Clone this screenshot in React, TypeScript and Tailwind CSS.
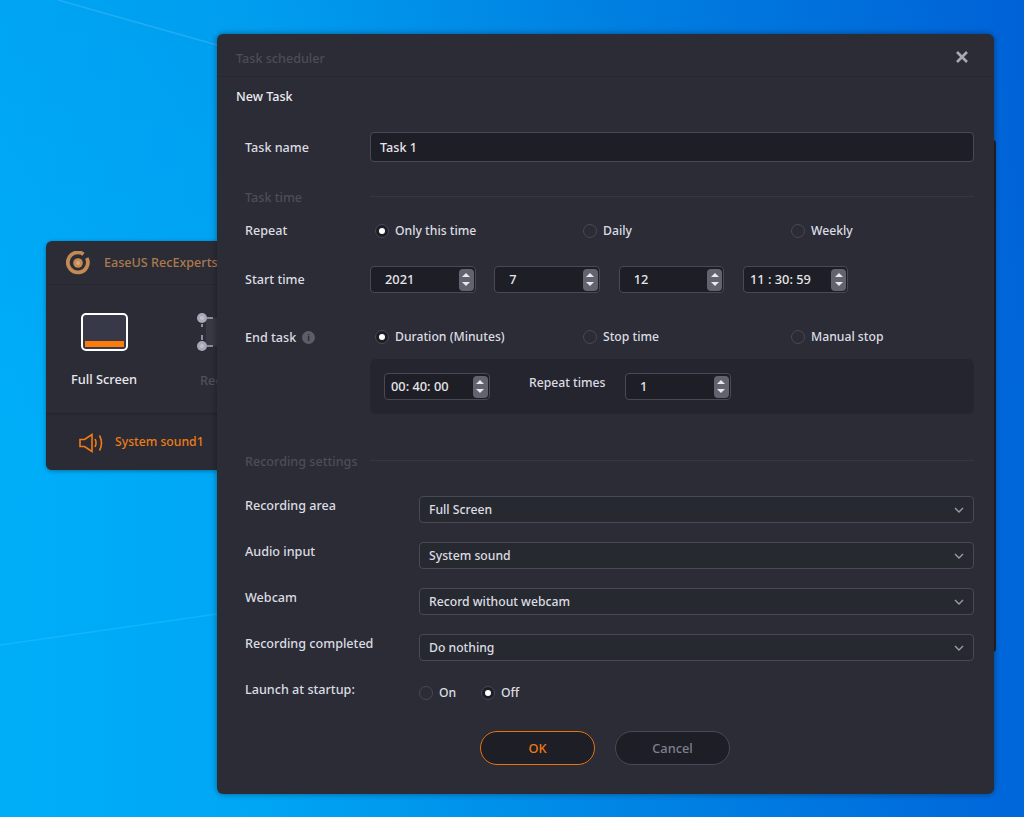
import React from "react";

function Spinner() {
  return (
    <div className="w-[15px] h-[22px] rounded-[4px] bg-[#63636f] flex flex-col items-center justify-center gap-[5px] shrink-0">
      <svg width="8" height="4" viewBox="0 0 8 4"><path d="M4 0L8 4H0z" fill="#e8e8ee" /></svg>
      <svg width="8" height="4" viewBox="0 0 8 4"><path d="M4 4L8 0H0z" fill="#e8e8ee" /></svg>
    </div>
  );
}

function NumberBox({ value, pl }: { value: string; pl: string }) {
  return (
    <div className={`w-[105.5px] h-[27px] rounded-[4px] border border-[#484955] bg-[#1e1e26] flex items-center justify-between pr-[1px] ${pl}`}>
      <span className="text-[#e6e6ea] text-[12.8px] font-medium leading-none">{value}</span>
      <Spinner />
    </div>
  );
}

function Radio({ label, checked, className }: { label: string; checked?: boolean; className?: string }) {
  return (
    <div className={`flex items-center gap-[6px] ${className ?? ""}`}>
      <div className={`w-[14px] h-[14px] rounded-full border-[1.5px] border-[#484955] flex items-center justify-center ${checked ? "bg-[#1e1e26]" : ""}`}>
        {checked && <div className="w-[6px] h-[6px] rounded-full bg-white" />}
      </div>
      <span className="text-[#dcdce2] text-[12.2px] font-medium leading-none">{label}</span>
    </div>
  );
}

function Label({ children, className }: { children: React.ReactNode; className?: string }) {
  return <span className={`block pt-[1px] text-[#dcdce2] text-[12.6px] font-medium leading-none ${className ?? ""}`}>{children}</span>;
}

function SectionTitle({ title }: { title: string }) {
  return (
    <div className="flex items-center pl-[28px] pr-[20px] h-[16px]">
      <span className="w-[125px] shrink-0 pt-[3px] text-[#4c4e5a] text-[12.6px] font-medium leading-none">{title}</span>
      <div className="flex-1 h-px bg-[#353641] -translate-y-[1px]" />
    </div>
  );
}

function SelectRow({ label, value }: { label: string; value: string }) {
  return (
    <div className="flex items-start pl-[28px] pr-[20px] h-[27px]">
      <div className="w-[174px] shrink-0 pt-[3px]"><Label>{label}</Label></div>
      <div className="flex-1 h-[27px] rounded-[4px] border border-[#484955] bg-[#272930] flex items-center justify-between pl-[9px] pr-[9px]">
        <span className="text-[#dcdce2] text-[12.2px] font-medium leading-none pt-[1px]">{value}</span>
        <svg width="10" height="6" viewBox="0 0 10 6" fill="none"><path d="M1 1l4 4 4-4" stroke="#9b9ba6" strokeWidth="1.4" /></svg>
      </div>
    </div>
  );
}

export default function App() {
  return (
    <div
      className="relative w-[1024px] h-[817px] overflow-hidden bg-[linear-gradient(to_bottom,rgba(0,50,180,0.08)_0%,rgba(0,50,180,0)_55%),linear-gradient(to_right,#00aef8_0%,#00a6f4_25%,#0084e4_62%,#0066da_100%)]"
      style={{ fontFamily: '"Noto Sans", sans-serif' }}
    >
      {/* wallpaper light rays */}
      <svg className="absolute inset-0" width="1024" height="817" viewBox="0 0 1024 817" fill="none">
        <path d="M58 0L217 45" stroke="#38b4f4" strokeWidth="1.5" opacity="0.6" />
        <path d="M0 645L217 614" stroke="#22c0ff" strokeWidth="1.5" opacity="0.5" />
      </svg>

      {/* recorder window */}
      <div className="absolute left-[46px] top-[241px] w-[400px] h-[229px] rounded-[6px] bg-[#2b2c36] flex flex-col shadow-[0_1px_4px_rgba(0,0,0,0.35)]">
        <div className="h-[44px] shrink-0 border-b border-[#272831] flex items-center pl-[20px] pt-[1px]">
          <svg width="24" height="24" viewBox="0 0 24 24" fill="none">
            <path d="M17.5 3.2A10 10 0 1 0 20.8 7" stroke="#c48a53" strokeWidth="3.8" />
            <circle cx="12" cy="12" r="4.8" fill="#c48a53" />
            <circle cx="12" cy="12" r="2" fill="#d8a878" />
          </svg>
          <span className="ml-[14px] text-[#ad7a4d] text-[12.6px] font-medium leading-none">EaseUS RecExperts</span>
        </div>
        <div className="flex-1 flex">
          <div className="w-[116px] flex flex-col items-center pt-[28px]">
            <div className="w-[47px] h-[38px] rounded-[5px] border-[2.5px] border-white bg-[#373848] flex flex-col justify-end p-[2px]">
              <div className="h-[6px] bg-[#fb7c0a]" />
            </div>
            <span className="mt-[22px] text-[#e8e8ec] text-[12.8px] font-medium leading-none">Full Screen</span>
          </div>
          <div className="flex-1 flex flex-col pl-[34px] pt-[25px]">
            <svg width="24" height="42" viewBox="0 0 24 42" fill="none">
              <path d="M10 8h14v28H10z" fill="#383944" />
              <path d="M11 8h6M11 36h6M6 14v3M6 25v5" stroke="#a8a8b8" strokeWidth="1.6" />
              <circle cx="6" cy="8" r="5" fill="#a8a8b8" />
              <circle cx="6" cy="36" r="5" fill="#a8a8b8" />
              <circle cx="6" cy="8" r="2" fill="#c0c0ce" />
              <circle cx="6" cy="36" r="2" fill="#c0c0ce" />
            </svg>
            <span className="mt-[22px] ml-[4px] text-[#4f505d] text-[12.8px] font-medium leading-none">Region</span>
          </div>
        </div>
        <div className="h-[57px] shrink-0 bg-[#2a2b35] rounded-b-[6px] shadow-[inset_0_3px_3px_-2px_rgba(0,0,0,0.25)] flex items-center pl-[33px]">
          <svg width="26" height="22" viewBox="0 0 26 22" fill="none" stroke="#f47c12" strokeWidth="1.6" className="translate-y-[1px]">
            <path d="M1 7.5h4.5L13 2.5v17l-7.5-5H1z" />
            <path d="M16 7c1.3 2.5 1.3 5.5 0 8" />
            <path d="M20.500 3.500c2.400 4.500 2.400 10.500 0 15" />
          </svg>
          <span className="ml-[10px] pt-[1px] text-[#ee7c14] text-[12.2px] font-medium leading-none">System sound1</span>
        </div>
      </div>

      {/* sliver of the window behind the dialog */}
      <div className="absolute left-[990px] top-[140px] w-[6px] h-[512px] rounded-r-[3px] bg-[#22232b]" />

      {/* task scheduler dialog */}
      <div className="absolute left-[217px] top-[34px] w-[777px] h-[760px] rounded-[6px] bg-[#2b2c36] flex flex-col shadow-[0_0_6px_rgba(0,0,0,0.4)]">
        <div className="h-[43px] shrink-0 border-b border-[#272831] flex items-center justify-between pl-[19px] pr-[25px] pt-[5px]">
          <span className="pt-[3px] text-[#4b4d59] text-[12.6px] font-medium leading-none">Task scheduler</span>
          <svg width="14" height="14" viewBox="0 0 14 14" className="-translate-y-[1px]" fill="none">
            <path d="M2 2l10 10M12 2L2 12" stroke="#a9a9b6" strokeWidth="2.6" />
          </svg>
        </div>
        <div className="pl-[19px] mt-[13px] h-[14px] flex items-center">
          <span className="text-[#ecedf0] text-[12.6px] font-medium leading-none">New Task</span>
        </div>

        <div className="mt-[28px] flex items-center pl-[28px] pr-[20px]">
          <div className="w-[125px] shrink-0"><Label className="pt-[3px]">Task name</Label></div>
          <div className="flex-1 h-[30px] rounded-[4px] border border-[#484955] bg-[#1e1e26] flex items-center pl-[9px]">
            <span className="pt-[3px] text-[#e6e6ea] text-[12.6px] font-medium leading-none">Task 1</span>
          </div>
        </div>

        <div className="mt-[27px]"><SectionTitle title="Task time" /></div>

        <div className="mt-[19px] flex items-center pl-[28px] h-[14px]">
          <div className="w-[130px] shrink-0"><Label>Repeat</Label></div>
          <Radio checked label="Only this time" className="w-[208px]" />
          <Radio label="Daily" className="w-[208px]" />
          <Radio label="Weekly" />
        </div>

        <div className="mt-[28px] flex items-center pl-[28px] h-[27px]">
          <div className="w-[125px] shrink-0"><Label>Start time</Label></div>
          <div className="flex gap-[18.83px]">
            <NumberBox value="2021" pl="pl-[14px]" />
            <NumberBox value="7" pl="pl-[14px]" />
            <NumberBox value="12" pl="pl-[14px]" />
            <NumberBox value="11 : 30: 59" pl="pl-[6px]" />
          </div>
        </div>

        <div className="mt-[37px] flex items-center pl-[28px] h-[14px]">
          <div className="w-[130px] shrink-0 flex items-center gap-[6px]">
            <Label className="pt-[3px]">End task</Label>
            <div className="w-[13px] h-[13px] rounded-full bg-[#5c5d69] flex items-center justify-center text-[#2b2c36] text-[9px] font-bold leading-none">i</div>
          </div>
          <Radio checked label="Duration (Minutes)" className="w-[208px]" />
          <Radio label="Stop time" className="w-[208px]" />
          <Radio label="Manual stop" />
        </div>

        <div className="mt-[15px] ml-[153px] mr-[20px] h-[55px] rounded-[6px] bg-[#24252e] flex items-center pl-[14px]">
          <NumberBox value="00: 40: 00" pl="pl-[6px]" />
          <span className="ml-[39.5px] -mt-[6px] w-[96px] shrink-0 text-[#dcdce2] text-[12.2px] font-medium leading-none">Repeat times</span>
          <NumberBox value="1" pl="pl-[14px]" />
        </div>

        <div className="mt-[39px]"><SectionTitle title="Recording settings" /></div>

        <div className="mt-[27px] flex flex-col gap-[19px]">
          <SelectRow label="Recording area" value="Full Screen" />
          <SelectRow label="Audio input" value="System sound" />
          <SelectRow label="Webcam" value="Record without webcam" />
          <SelectRow label="Recording completed" value="Do nothing" />
        </div>

        <div className="mt-[25px] flex items-center pl-[28px] h-[14px]">
          <div className="w-[174px] shrink-0 -translate-y-[3px]"><Label>Launch at startup:</Label></div>
          <Radio label="On" className="w-[62px]" />
          <Radio checked label="Off" />
        </div>

        <div className="mt-[31px] flex justify-center gap-[20px] pr-[1px]">
          <div className="w-[115px] h-[34px] rounded-full border border-[#e8730f] bg-[#1e1e26] flex items-center justify-center text-[#ec7a14] text-[12.8px] font-medium leading-none">OK</div>
          <div className="w-[115px] h-[34px] rounded-full border border-[#484955] bg-[#1e1e26] flex items-center justify-center text-[#7e808e] text-[12.8px] font-medium leading-none">Cancel</div>
        </div>
      </div>
    </div>
  );
}
